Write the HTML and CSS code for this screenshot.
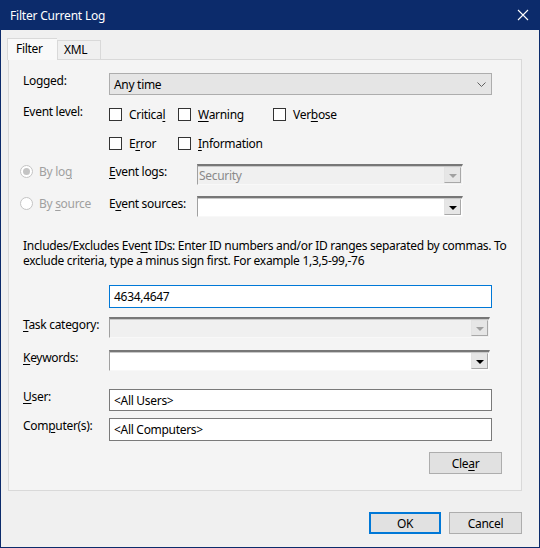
FILE: index.html
```html
<!DOCTYPE html>
<html lang="en">

<head>
    <meta charset="UTF-8">
    <meta name="viewport" content="width=device-width, initial-scale=1.0">
    <title>Filter Current Log</title>
    <link rel="stylesheet" href="styles.css">
</head>

<body>
    <div class="window">
        <div class="titlebar">
            <span class="title">Filter Current Log</span>
            <span class="close">
                <svg width="12" height="12" viewBox="0 0 12 12">
                    <path d="M1 1 L11 11 M11 1 L1 11" stroke="#fff" stroke-width="1.1" fill="none" />
                </svg>
            </span>
        </div>

        <div class="content">
            <div class="tabs">
                <div class="tab active">Filter</div>
                <div class="tab">XML</div>
            </div>

            <div class="panel">
                <!-- Logged -->
                <div class="row row-logged">
                    <div class="label">Logged:</div>
                    <div class="select">
                        <span>Any time</span>
                        <svg class="chevron" width="9" height="5" viewBox="0 0 9 5">
                            <path d="M0.5 0.5 L4.5 4.5 L8.5 0.5" stroke="#606060" stroke-width="1" fill="none" />
                        </svg>
                    </div>
                </div>

                <!-- Event level -->
                <div class="row row-level">
                    <div class="label">Event level:</div>
                    <label class="check w-critical"><span class="box"></span><span>Critica<u>l</u></span></label>
                    <label class="check w-warning"><span class="box"></span><span><u>W</u>arning</span></label>
                    <label class="check"><span class="box"></span><span>Ver<u>b</u>ose</span></label>
                </div>
                <div class="row row-level2">
                    <div class="label"></div>
                    <label class="check w-critical"><span class="box"></span><span>E<u>r</u>ror</span></label>
                    <label class="check"><span class="box"></span><span><u>I</u>nformation</span></label>
                </div>

                <!-- By log / By source -->
                <div class="row row-source first">
                    <label class="radio disabled"><span class="dot checked"></span><span>By lo<u>g</u></span></label>
                    <div class="label label-wide"><u>E</u>vent logs:</div>
                    <div class="combo combo-short disabled">
                        <span>Security</span>
                        <span class="drop"><span class="arrow"></span></span>
                    </div>
                </div>
                <div class="row row-source second">
                    <label class="radio disabled"><span class="dot"></span><span>By <u>s</u>ource</span></label>
                    <div class="label label-wide">E<u>v</u>ent sources:</div>
                    <div class="combo combo-short">
                        <span></span>
                        <span class="drop"><span class="arrow"></span></span>
                    </div>
                </div>

                <p class="desc">Includes/Excludes Eve<u>n</u>t IDs: Enter ID numbers and/or ID ranges separated by commas. To exclude criteria, type a minus sign first. For example 1,3,5-99,-76</p>

                <div class="row row-ids">
                    <div class="label"></div>
                    <div class="textbox focused">4634,4647</div>
                </div>

                <div class="row row-task">
                    <div class="label"><u>T</u>ask category:</div>
                    <div class="combo combo-long disabled">
                        <span></span>
                        <span class="drop"><span class="arrow"></span></span>
                    </div>
                </div>

                <div class="row row-keywords">
                    <div class="label"><u>K</u>eywords:</div>
                    <div class="combo combo-long">
                        <span></span>
                        <span class="drop"><span class="arrow"></span></span>
                    </div>
                </div>

                <div class="row row-user">
                    <div class="label"><u>U</u>ser:</div>
                    <div class="textbox">&lt;All Users&gt;</div>
                </div>

                <div class="row row-computer">
                    <div class="label">Com<u>p</u>uter(s):</div>
                    <div class="textbox">&lt;All Computers&gt;</div>
                </div>

                <div class="clear-row">
                    <button class="btn">Cle<u>a</u>r</button>
                </div>
            </div>

            <div class="footer">
                <button class="btn btn-default">OK</button>
                <button class="btn">Cancel</button>
            </div>
        </div>
    </div>
</body>

</html>
```

FILE: styles.css
```css
* {
    box-sizing: border-box;
}

body {
    margin: 0;
    background-color: #f0f0f0;
    font-family: "Noto Sans", "Open Sans", sans-serif;
    font-size: 12px;
    letter-spacing: -0.3px;
    color: #000;
}

u {
    text-decoration: underline;
    text-underline-offset: 2px;
    text-decoration-thickness: 1px;
}

.window {
    width: 540px;
    height: 548px;
    border: 1px solid #0c2b6b;
    border-top: none;
    background-color: #f0f0f0;
}

.titlebar {
    height: 30px;
    margin: 0 -1px;
    background-color: #0c2b6b;
    color: white;
    display: flex;
    align-items: center;
    justify-content: space-between;
    padding: 0 10px 0 10px;
}

.title {
    font-size: 12px;
    letter-spacing: -0.2px;
}

.close {
    display: flex;
    width: 12px;
    height: 12px;
    margin-right: 1px;
}

.content {
    padding: 8px 0 0 7px;
}

/* tabs */
.tabs {
    display: flex;
    height: 21px;
    align-items: flex-end;
}

.tab {
    height: 19px;
    padding: 0 8px 0 6px;
    border: 1px solid #d9d9d9;
    border-bottom: none;
    background-color: #f0f0f0;
    line-height: 18px;
    width: 44px;
}

.tab.active {
    height: 22px;
    width: 50px;
    margin-left: -1px;
    margin-bottom: -1px;
    padding-left: 8px;
    background-color: #f9f9f9;
    border-color: #d9d9d9;
    border-right: none;
    position: relative;
    z-index: 1;
    line-height: 20px;
}

.panel {
    width: 514px;
    height: 432px;
    border: 1px solid #d9d9d9;
    background-color: #f4f4f4;
    padding: 0 0 0 14px;
}

.row {
    display: flex;
    align-items: center;
}

.label {
    width: 86px;
    flex: none;
    line-height: 15px;
    align-self: flex-start;
}

.label-wide {
    width: 88px;
}

.row-logged {
    height: 22px;
    margin-top: 13px;
}

.row-level {
    height: 20px;
    margin-top: 9px;
}

.row-level2 {
    height: 20px;
    margin-top: 9px;
}

.row-source {
    height: 21px;
    margin-left: -3px;
}

.row-source.first {
    margin-top: 11px;
}

.row-source.second {
    margin-top: 11px;
}

.row-ids {
    height: 23px;
    margin-top: 17px;
}

.row-task {
    height: 21px;
    margin-top: 9px;
}

.row-keywords {
    height: 21px;
    margin-top: 12px;
}

.row-user {
    height: 22px;
    margin-top: 18px;
}

.row-computer {
    height: 23px;
    margin-top: 7px;
}

/* themed dropdown */
.select {
    width: 383px;
    height: 22px;
    border: 1px solid #adadad;
    background-color: #e5e5e5;
    display: flex;
    align-items: center;
    justify-content: space-between;
    padding: 0 5px 0 4px;
}

.chevron {
    display: block;
}

/* checkboxes */
.check {
    display: flex;
    align-items: center;
    gap: 7px;
}

.w-critical {
    width: 69px;
}

.w-warning {
    width: 95px;
}

.box {
    width: 13px;
    height: 13px;
    border: 1px solid #333;
    background-color: white;
    flex: none;
}

/* radios */
.radio {
    width: 89px;
    height: 15px;
    align-self: flex-start;
    display: flex;
    align-items: center;
    gap: 6px;
}

.radio.disabled {
    color: #a0a0a0;
}

.dot {
    width: 13px;
    height: 13px;
    border-radius: 50%;
    border: 1px solid #c4c4c4;
    background-color: #fff;
    display: flex;
    align-items: center;
    justify-content: center;
}

.dot.checked::after {
    content: "";
    width: 7px;
    height: 7px;
    border-radius: 50%;
    background-color: #c4c4c4;
}

/* classic combo boxes */
.combo {
    height: 21px;
    border-style: solid;
    border-width: 2px 1px 1px 1px;
    border-color: #777 #f8f8f8 #f8f8f8 #a0a0a0;
    box-shadow: inset 0 1px 0 #c8c8c8;
    background-color: white;
    display: flex;
    align-items: center;
    justify-content: space-between;
    padding: 0 1px 0 1px;
}

.combo.disabled {
    background-color: #f0f0f0;
    color: #8a8a8a;
}

.combo-short {
    width: 266px;
}

.combo-long {
    width: 381px;
}

.drop {
    width: 17px;
    height: 16px;
    border: 1px solid;
    border-color: #e3e3e3 #a8a8a8 #a8a8a8 #e3e3e3;
    background-color: #e6e6e6;
    display: flex;
    align-items: center;
    justify-content: center;
}

.arrow {
    width: 0;
    height: 0;
    border-left: 4px solid transparent;
    border-right: 4px solid transparent;
    border-top: 4px solid #000;
    margin-top: 1px;
}

.combo.disabled .arrow {
    border-top-color: #a0a0a0;
}

/* description */
.desc {
    margin: 22px 0 0 0;
    line-height: 14.5px;
    width: 492px;
}

/* text boxes */
.textbox {
    width: 383px;
    height: 100%;
    border: 1px solid #7a7a7a;
    background-color: white;
    padding: 0 4px;
    display: flex;
    align-items: center;
}

.textbox.focused {
    border-color: #0078d7;
}

/* buttons */
.clear-row {
    display: flex;
    justify-content: flex-end;
    padding-right: 19px;
    margin-top: 11px;
}

.btn {
    font-family: inherit;
    font-size: 12px;
    letter-spacing: -0.3px;
    width: 73px;
    height: 22px;
    border: 1px solid #adadad;
    background-color: #e1e1e1;
    color: #000;
    padding: 0;
}

.btn-default {
    width: 72px;
    border: 2px solid #0078d7;
}

.footer {
    display: flex;
    justify-content: flex-end;
    gap: 8px;
    margin-top: 21px;
    padding-right: 17px;
}
```
